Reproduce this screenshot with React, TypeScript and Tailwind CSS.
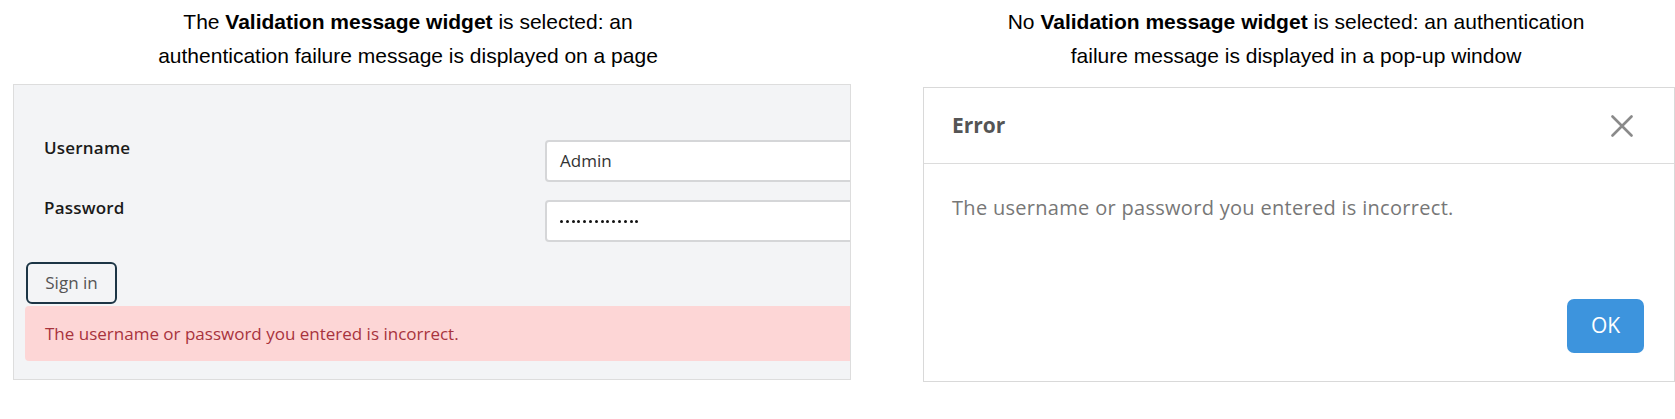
import React from "react";

const CloseIcon: React.FC = () => (
  <svg width="22" height="22" viewBox="0 0 22 22" fill="none">
    <path d="M1.5 1.5L20.5 20.5M20.5 1.5L1.5 20.5" stroke="#8a8a8a" strokeWidth="2.6" strokeLinecap="round" />
  </svg>
);

const dots = Array.from({ length: 14 });

const App: React.FC = () => {
  return (
    <div className="flex h-[419px] w-[1675px] items-start overflow-hidden bg-white">
      {/* Left: validation widget on the page */}
      <div className="w-[851px] shrink-0">
        <p className="mt-[5px] w-[816px] text-center font-['Liberation_Sans',Arial,sans-serif] text-[21px] leading-[34px] text-black">
          The <b>Validation message widget</b> is selected: an
          <br />
          authentication failure message is displayed on a page
        </p>
        <div className="ml-[13px] mt-[11px] h-[296px] w-[838px] overflow-hidden border border-[#dddddd] bg-[#f3f4f6] px-[11px] pt-[55px] font-['Open_Sans','Lato',sans-serif]">
          <div className="flex items-start pl-[19px]">
            <div className="-mt-[4px] w-[501px] shrink-0 text-[17px] font-semibold leading-[24px] tracking-[0.2px] text-[#1a1a1a]">Username</div>
            <div className="flex h-[42px] w-[400px] shrink-0 items-center rounded-[4px] border-2 border-[#d5d6d8] bg-white px-[13px] text-[17px] text-[#333]">
              Admin
            </div>
          </div>
          <div className="mt-[18px] flex items-start pl-[19px]">
            <div className="-mt-[4px] w-[501px] shrink-0 text-[17px] font-semibold leading-[24px] tracking-[0.2px] text-[#1a1a1a]">Password</div>
            <div className="flex h-[42px] w-[400px] shrink-0 items-center gap-[2.8px] rounded-[4px] border-2 border-[#d5d6d8] bg-white px-[13px]">
              {dots.map((_, i) => (
                <span key={i} className="h-[3px] w-[3px] rounded-full bg-[#111]" />
              ))}
            </div>
          </div>
          <button className="mt-[20px] ml-[1px] flex h-[42px] w-[91px] items-center justify-center rounded-[6px] border-2 border-[#1c3545] text-[17px] text-[#555]">
            Sign in
          </button>
          <div className="mt-[2px] flex h-[55px] w-[900px] items-center rounded-l-[4px] bg-[#fdd6d6] pl-[20px] text-[17px] text-[#a8333d]">
            The username or password you entered is incorrect.
          </div>
        </div>
      </div>

      {/* Right: message in a pop-up window */}
      <div className="ml-[66px] w-[758px] shrink-0">
        <p className="mt-[5px] text-center font-['Liberation_Sans',Arial,sans-serif] text-[21px] leading-[34px] text-black">
          No <b>Validation message widget</b> is selected: an authentication
          <br />
          failure message is displayed in a pop-up window
        </p>
        <div className="ml-[6px] mt-[14px] flex h-[295px] w-[752px] flex-col border border-[#d9d9d9] bg-white font-['Open_Sans','Lato',sans-serif]">
          <div className="flex h-[76px] shrink-0 items-center justify-between border-b border-[#dcdcdc] pl-[28px] pr-[41px]">
            <span className="text-[21px] font-bold text-[#555]">Error</span>
            <CloseIcon />
          </div>
          <div className="flex-1 pl-[28px] pt-[29px] text-[20px] tracking-[0.3px] text-[#777]">
            The username or password you entered is incorrect.
          </div>
          <div className="flex justify-end pb-[28px] pr-[30px]">
            <button className="flex h-[54px] w-[77px] items-center justify-center rounded-[7px] bg-[#3d94dd] text-[21px] text-white">
              OK
            </button>
          </div>
        </div>
      </div>
    </div>
  );
};

export default App;
